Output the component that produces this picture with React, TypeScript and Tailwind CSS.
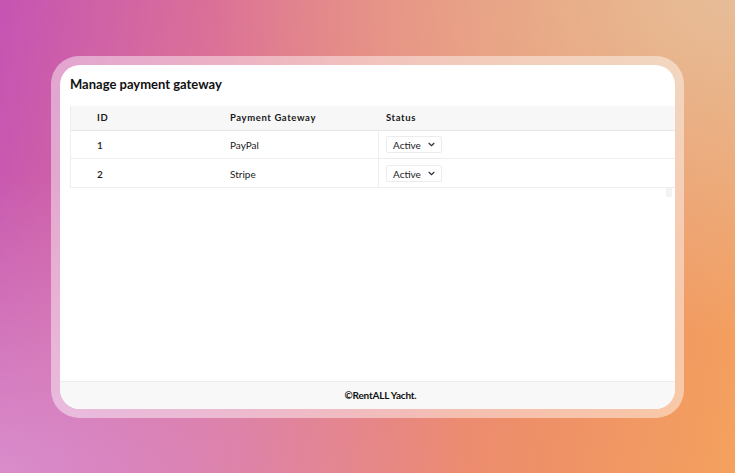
import React from "react";

function Chevron() {
  return (
    <svg width="7" height="5" viewBox="0 0 8 6" fill="none">
      <path d="M1 1.5 L4 4.5 L7 1.5" stroke="#333" strokeWidth="1.4" strokeLinecap="round" strokeLinejoin="round" />
    </svg>
  );
}

function StatusSelect() {
  return (
    <div className="flex items-center justify-between w-[56px] h-[17px] border border-[#ececec] rounded-[2px] bg-white pl-[6px] pr-[6px]">
      <span className="text-[10px] leading-[12px] pt-[1px] text-[#222]">Active</span>
      <Chevron />
    </div>
  );
}

const rows = [
  { id: "1", name: "PayPal" },
  { id: "2", name: "Stripe" },
];

export default function App() {
  return (
    <div
      className="w-full h-[473px] flex items-center justify-center bg-[radial-gradient(ellipse_at_top_right,#e6bd98_0%,rgba(230,189,152,0)_50%),radial-gradient(ellipse_at_bottom_left,#d98ccb_0%,rgba(217,140,203,0)_45%),linear-gradient(100deg,#c554b3_0%,#dc7296_28%,#e8837c_50%,#ee9068_75%,#f4a15e_100%)]"
      style={{ fontFamily: "Lato, 'Open Sans', sans-serif" }}
    >
      <div className="w-[633px] h-[362px] rounded-[28px] bg-[rgba(255,255,255,0.45)] p-[9px] flex">
        <div className="flex-1 rounded-[20px] bg-white overflow-hidden flex flex-col">
          <div className="pt-[9px] pl-[10px] h-[41px]">
            <h1 className="text-[13px] leading-[20px] font-bold text-[#111]">Manage payment gateway</h1>
          </div>
          <div className="ml-[10px] border-l border-b border-[#eeeeee] text-[#1a1a1a]">
            <div className="grid grid-cols-[159px_148px_1fr] h-[25px] pt-[2px] bg-[#f7f7f7] border-b border-[#e6e6e6] items-center text-[9.5px] font-bold tracking-[0.6px]">
              <div className="pl-[26px]">ID</div>
              <div>Payment Gateway</div>
              <div className="pl-[8px]">Status</div>
            </div>
            {rows.map((r, i) => (
              <div
                key={r.id}
                className={`grid grid-cols-[159px_148px_1fr] h-[28px] items-center text-[10px] ${i === 0 ? "border-b border-[#eeeeee]" : ""}`}
              >
                <div className="pl-[26px] pt-[3px] font-semibold">{r.id}</div>
                <div className="pt-[3px]">{r.name}</div>
                <div className="h-full flex items-center pl-[7px] pt-[1px] border-l border-[#eeeeee]">
                  <StatusSelect />
                </div>
              </div>
            ))}
          </div>
          <div className="flex justify-end pr-[3px]">
            <div className="w-[6px] h-[9px] bg-[#f3f3f3]" />
          </div>
          <div className="flex-1" />
          <div className="h-[28px] bg-[#f8f8f8] border-t border-[#ececec] flex items-center justify-center pl-[26px]">
            <span className="text-[10px] font-bold text-[#111] tracking-[-0.2px]">©RentALL Yacht.</span>
          </div>
        </div>
      </div>
    </div>
  );
}
